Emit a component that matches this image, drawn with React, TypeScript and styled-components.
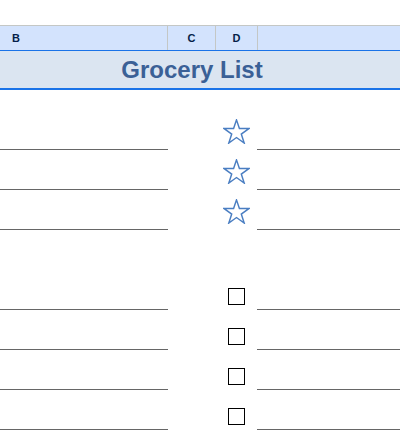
import React from "react";
import styled, { createGlobalStyle } from "styled-components";

const GlobalStyle = createGlobalStyle`
  body {
    margin: 0;
    background: #ffffff;
    font-family: "Liberation Sans", Arial, sans-serif;
  }
`;

const COLUMNS = "168px 48px 41px 1fr";

const Sheet = styled.div`
  width: 400px;
  height: 438px;
  overflow: hidden;
  padding-top: 25px;
  box-sizing: border-box;
`;

const HeaderRow = styled.div`
  display: grid;
  grid-template-columns: 168px 48px 42px 1fr;
  height: 24px;
  border-top: 1px solid #c4c7c5;
  border-bottom: 1px solid #1a73e8;
  background: #d3e3fd;
`;

const HeaderCell = styled.div<{ $left?: boolean }>`
  display: flex;
  align-items: center;
  justify-content: ${(p) => (p.$left ? "flex-start" : "center")};
  padding-left: ${(p) => (p.$left ? "12px" : "0")};
  border-right: 1px solid #c4c7c5;
  color: #041e49;
  font-size: 11px;
  font-weight: bold;

  &:last-child {
    border-right: none;
  }
`;

const TitleBand = styled.div`
  display: flex;
  align-items: center;
  justify-content: center;
  height: 37px;
  padding-right: 16px;
  background: #dbe5f1;
  border-bottom: 2px solid #1a73e8;
  color: #3a6096;
  font-size: 24px;
  font-weight: bold;
`;

const Spacer = styled.div<{ $h: number }>`
  height: ${(p) => p.$h}px;
`;

const Row = styled.div`
  display: grid;
  grid-template-columns: ${COLUMNS};
  height: 40px;
`;

const LineCell = styled.div<{ $lined?: boolean }>`
  box-sizing: border-box;
  border-bottom: ${(p) => (p.$lined ? "1px solid #666666" : "none")};
`;

const MarkCell = styled.div<{ $bottom: number }>`
  display: flex;
  justify-content: center;
  align-items: flex-end;
  padding-bottom: ${(p) => p.$bottom}px;
`;

const Box = styled.div`
  width: 17px;
  height: 17px;
  box-sizing: border-box;
  border: 1.5px solid #000000;
`;

const Star = () => (
  <svg width="27" height="25" viewBox="0 0 26 24">
    <polygon
      points="13,0.8 15.8,9.2 24.9,9.2 17.6,14.5 20.4,23.1 13,17.8 5.6,23.1 8.4,14.5 1.1,9.2 10.2,9.2"
      fill="none"
      stroke="#4a7ec2"
      strokeWidth="1.4"
      strokeLinejoin="miter"
    />
  </svg>
);

const StarRow = () => (
  <Row>
    <LineCell $lined />
    <LineCell />
    <MarkCell $bottom={6}>
      <Star />
    </MarkCell>
    <LineCell $lined />
  </Row>
);

const CheckRow = () => (
  <Row>
    <LineCell $lined />
    <LineCell />
    <MarkCell $bottom={5}>
      <Box />
    </MarkCell>
    <LineCell $lined />
  </Row>
);

export default function App() {
  return (
    <>
      <GlobalStyle />
      <Sheet>
        <HeaderRow>
          <HeaderCell $left>B</HeaderCell>
          <HeaderCell>C</HeaderCell>
          <HeaderCell>D</HeaderCell>
          <HeaderCell />
        </HeaderRow>
        <TitleBand>Grocery List</TitleBand>
        <Spacer $h={20} />
        {[0, 1, 2].map((i) => (
          <StarRow key={i} />
        ))}
        <Spacer $h={40} />
        {[0, 1, 2, 3].map((i) => (
          <CheckRow key={i} />
        ))}
      </Sheet>
    </>
  );
}
